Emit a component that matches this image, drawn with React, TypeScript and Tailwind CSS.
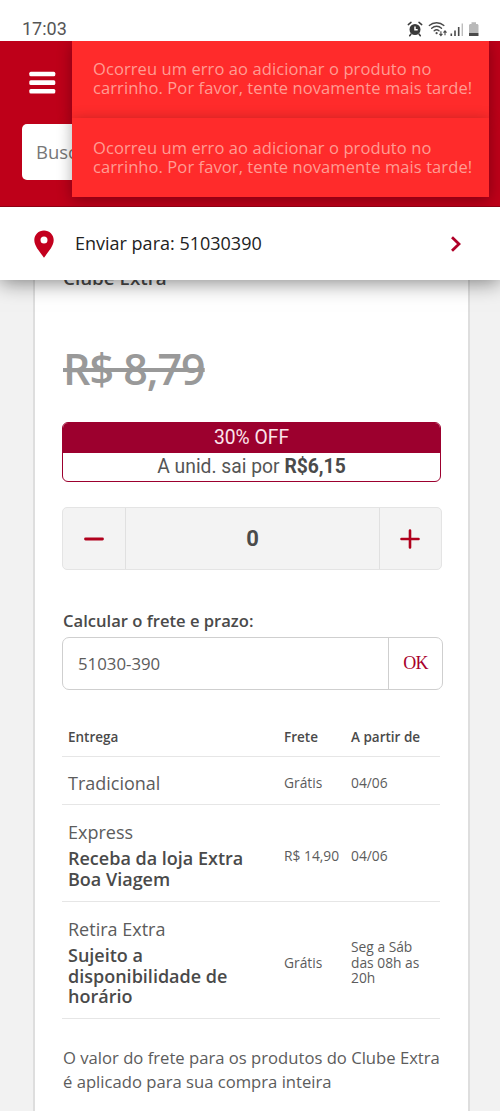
import React from "react";

const ERROR_TEXT = [
  "Ocorreu um erro ao adicionar o produto no",
  "carrinho. Por favor, tente novamente mais tarde!",
];

function StatusIcons() {
  return (
    <svg className="h-[18px] w-[74px]" viewBox="0 0 74 18" fill="none">
      <g stroke="#3a3a3a" strokeLinecap="round">
        <circle cx="8" cy="9.5" r="4.6" fill="#3a3a3a" strokeWidth="1.8" />
        <path d="M1.3 4.6 4 2.4M14.7 4.6 12 2.4M4 14l-1.3 1.8M12 14l1.3 1.8" strokeWidth="1.5" />
        <path d="M8 6.4v3.4h2.7" stroke="#fff" strokeWidth="1.5" strokeLinecap="butt" />
      </g>
      <g stroke="#4a4a4a" strokeWidth="1.4" strokeLinecap="round">
        <path d="M22.3 5.4c4-3.6 10.6-3.6 14.6 0M24.7 8.2c2.9-2.6 7-2.6 9.8 0M27.2 10.8c1.4-1.2 3.4-1.2 4.8 0" />
      </g>
      <circle cx="29.6" cy="13.2" r="1.1" fill="#4a4a4a" />
      <path d="M33.9 11.2v4M32.4 13.8l1.5 1.8 1.5-1.8M38 15.2v-4M36.5 12.6l1.5-1.8 1.5 1.8" stroke="#4a4a4a" strokeWidth="1.1" />
      <path d="M44.3 13.5V16M48 10.5V16M51.7 7V16" stroke="#4a4a4a" strokeWidth="1.6" />
      <path d="M55.3 3.5V16" stroke="#bdbdbd" strokeWidth="1.4" />
      <path d="M64.5 2.3h4.5v1.6h1.6l.9 1.2V13H62V5.1l.9-1.2h1.6z" fill="#b9b9b9" />
      <path d="M62 13h9.5v3h-9.5z" fill="#4a4a4a" />
    </svg>
  );
}

function Toast({ className }: { className: string }) {
  return (
    <div
      className={`bg-[#ff2b2b] pl-[21px] text-[16.5px] leading-[19px] tracking-[0.085px] whitespace-nowrap text-[#ff9c93] shadow-[0_3px_14px_rgba(0,0,0,0.32)] ${className}`}
    >
      {ERROR_TEXT.map((line) => (
        <div key={line}>{line}</div>
      ))}
    </div>
  );
}

function Row({
  name,
  detail = [],
  price,
  date,
  height,
}: {
  name: string;
  detail?: string[];
  price: string;
  date: string[];
  height: string;
}) {
  return (
    <div
      className={`grid grid-cols-[216px_67px_1fr] items-center border-b border-[#e6e6e6] pt-[4px] pl-[6px] text-[13.8px] leading-[15.7px] whitespace-nowrap text-[#5c5c5c] ${height}`}
    >
      <div>
        <div className="text-[18px] leading-[24px]">{name}</div>
        {detail.length > 0 && (
          <div className="mt-[4px] text-[18px] leading-[20.8px] font-semibold text-[#4a4a4a]">
            {detail.map((d) => (
              <div key={d}>{d}</div>
            ))}
          </div>
        )}
      </div>
      <div className="pt-px">{price}</div>
      <div className="pt-px">
        {date.map((d) => (
          <div key={d}>{d}</div>
        ))}
      </div>
    </div>
  );
}

export default function App() {
  return (
    <div className="flex h-[1111px] w-[500px] flex-col overflow-hidden bg-[#f2f2f2] font-['Open_Sans',sans-serif]">
      <header className="relative z-10 h-[280px] shrink-0 bg-white shadow-[0_2px_20px_rgba(0,0,0,0.5)]">
        <div className="flex h-[41px] items-end justify-between bg-white pr-[19px] pb-[3px] pl-[22px]">
          <span className="font-[Roboto,sans-serif] text-[18px] leading-[18px] text-[#555]">17:03</span>
          <StatusIcons />
        </div>
        <div className="relative h-[166px] overflow-hidden border-b border-[#8f0013] bg-[#be0019] pt-[30px] pl-[22px]">
          <svg className="ml-[7px] h-[24px] w-[27px]" viewBox="0 0 27 24">
            <g fill="#fff">
              <rect x="0.3" y="0.7" width="26" height="4.6" rx="1.5" />
              <rect x="0.3" y="9.3" width="26" height="4.6" rx="1.5" />
              <rect x="0.3" y="18" width="26" height="4.6" rx="1.5" />
            </g>
          </svg>
          <div className="mt-[29px] flex h-[56px] w-[456px] items-center rounded-[5px] bg-white pl-[14px] text-[18.5px] text-[#777]">
            Buscar
          </div>
          <div className="absolute top-0 left-[72px] w-[417px]">
            <Toast className="h-[77px] pt-[18px]" />
            <Toast className="h-[79px] pt-[20px]" />
          </div>
        </div>
        <div className="flex h-[73px] items-center pr-[39px] pl-[34px]">
          <svg className="h-[28px] w-[20px]" viewBox="0 0 20 28">
            <path
              d="M10 .5C4.6.5.3 4.7.3 10 .3 16.5 6.5 22.5 10 27.7 13.5 22.5 19.7 16.5 19.7 10 19.7 4.7 15.4.5 10 .5zm0 6a3.500 3.500 0 1 1 0 7 3.500 3.500 0 0 1 0-7z"
              fill="#c3001e"
            />
          </svg>
          <span className="ml-[21px] flex-1 text-[18px] text-[#222]">Enviar para: 51030390</span>
          <svg className="h-[16px] w-[10px]" viewBox="0 0 10 16" fill="none">
            <path d="M1 1.2 8 8 1 14.8" stroke="#b00028" strokeWidth="2.8" />
          </svg>
        </div>
      </header>

      <main className="ml-[33px] w-[437px] flex-1 border-x-2 border-[#dedede] bg-white px-[27px]">
        <div className="-mt-[14px] h-[24px] pl-px text-[18.8px] leading-[24px] font-semibold text-[#4a4a4a]">Clube Extra</div>
        <div className="mt-[51px] flex h-[56px] pl-px text-[43px] leading-[56px] font-semibold tracking-[-1px] text-[#999]">
          <span className="whitespace-nowrap line-through decoration-[4px]">R$ 8,79</span>
        </div>

        <section className="mt-[25px] flex h-[60px] w-[379px] flex-col overflow-hidden rounded-[6px] border-[1.5px] border-[#9c002e] text-center font-[Roboto,sans-serif] text-[19.3px] text-[#555]">
          <div className="h-[30px] bg-[#9c002e] leading-[29px] text-[#fbe3ea]">30% OFF</div>
          <div className="leading-[27px]">
            A unid. sai por <b className="text-[#4a4a4a]">R$6,15</b>
          </div>
        </section>

        <section className="mt-[25px] flex h-[63px] w-[380px] rounded-[5px] border border-[#e4e4e4] bg-[#f3f3f3]">
          <div className="flex w-[63px] items-center justify-center border-r border-[#e0e0e0]">
            <svg className="h-[20px] w-[20px]" viewBox="0 0 20 20">
              <path d="M1.5 10h17" stroke="#b0001c" strokeWidth="2.8" strokeLinecap="round" />
            </svg>
          </div>
          <div className="flex flex-1 items-center justify-center font-[Roboto,sans-serif] text-[22px] font-bold text-[#4a4a4a]">
            0
          </div>
          <div className="flex w-[62px] items-center justify-center border-l border-[#e0e0e0] pr-px">
            <svg className="h-[20px] w-[20px]" viewBox="0 0 20 20">
              <path d="M1.5 10h17M10 1.5v17" stroke="#b0001c" strokeWidth="2.6" strokeLinecap="round" />
            </svg>
          </div>
        </section>

        <div className="mt-[39px] h-[24px] pl-px text-[16.6px] leading-[24px] font-semibold whitespace-nowrap text-[#4a4a4a]">
          Calcular o frete e prazo:
        </div>
        <div className="mt-[4px] flex h-[53px] w-[381px] items-center rounded-[7px] border-[1.5px] border-[#cfcfcf] text-[16.8px] text-[#5c5c5c]">
          <div className="flex-1 pl-[15px]">51030-390</div>
          <div className="flex h-full w-[54px] items-center justify-center border-l border-[#cfcfcf] font-['Liberation_Serif',serif] text-[18px] tracking-[-0.8px] text-[#a8002c]">
            OK
          </div>
        </div>

        <section className="w-[378px]">
          <div className="grid h-[67px] grid-cols-[216px_67px_1fr] border-b border-[#e6e6e6] pt-[37px] pl-[6px] text-[13.5px] leading-[20px] font-semibold whitespace-nowrap text-[#4a4a4a]">
            <div>Entrega</div>
            <div>Frete</div>
            <div>A partir de</div>
          </div>
          <Row name="Tradicional" price="Grátis" date={["04/06"]} height="h-[48px]" />
          <Row
            name="Express"
            detail={["Receba da loja Extra", "Boa Viagem"]}
            price="R$ 14,90"
            date={["04/06"]}
            height="h-[97px]"
          />
          <Row
            name="Retira Extra"
            detail={["Sujeito a", "disponibilidade de", "horário"]}
            price="Grátis"
            date={["Seg a Sáb", "das 08h as", "20h"]}
            height="h-[117px]"
          />
        </section>

        <p className="mt-[27px] pl-px text-[16.65px] leading-[23.8px] whitespace-nowrap text-[#5c5c5c]">
          O valor do frete para os produtos do Clube Extra
          <br />é aplicado para sua compra inteira
        </p>
      </main>
    </div>
  );
}
